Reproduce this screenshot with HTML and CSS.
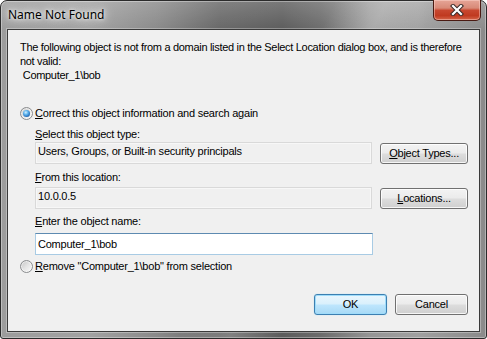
FILE: index.html
```html
<!DOCTYPE html>
<html>
<head>
<meta charset="utf-8">
<title>Name Not Found</title>
<link rel="stylesheet" href="styles.css">
</head>
<body>
<div class="window">
  <div class="titlebar">
    <span class="title">Name Not Found</span>
    <button class="close" aria-label="Close">
      <svg width="14" height="12" viewBox="0 0 14 12">
        <path d="M3 2 L11 10 M11 2 L3 10" stroke="#3a2b28" stroke-width="4.2" stroke-linecap="square" fill="none"/>
        <path d="M3 2 L11 10 M11 2 L3 10" stroke="#ffffff" stroke-width="2.2" stroke-linecap="square" fill="none"/>
      </svg>
    </button>
  </div>
  <div class="client">
    <p class="msg">The following object is not from a domain listed in the Select Location dialog box, and is therefore<br>not valid:<br>&nbsp;Computer_1\bob</p>

    <div class="option opt1">
      <span class="radio checked"></span>
      <span class="opt-label"><u>C</u>orrect this object information and search again</span>
    </div>

    <div class="group">
      <div class="label lbl1"><u>S</u>elect this object type:</div>
      <div class="row row1">
        <div class="field ro">Users, Groups, or Built-in security principals</div>
        <button class="btn side"><u>O</u>bject Types...</button>
      </div>
      <div class="label lbl2"><u>F</u>rom this location:</div>
      <div class="row row2">
        <div class="field ro">10.0.0.5</div>
        <button class="btn side"><u>L</u>ocations...</button>
      </div>
      <div class="label lbl3"><u>E</u>nter the object name:</div>
      <div class="field edit">Computer_1\bob</div>
    </div>

    <div class="option opt2">
      <span class="radio"></span>
      <span class="opt-label"><u>R</u>emove "Computer_1\bob" from selection</span>
    </div>

    <div class="footer">
      <button class="btn default">OK</button>
      <button class="btn">Cancel</button>
    </div>
  </div>
</div>
</body>
</html>
```
FILE: styles.css
```css
* { box-sizing: border-box; }
html, body { margin: 0; padding: 0; }
body {
  width: 487px;
  height: 339px;
  overflow: hidden;
  font-family: "Liberation Sans", Arial, sans-serif;
  font-size: 11px;
  letter-spacing: -0.22px;
  color: #000;
  background: #ffffff;
}

.window {
  position: relative;
  width: 487px;
  height: 339px;
  border: 1px solid #2b2b2b;
  border-radius: 7px 7px 3px 3px;
  padding: 0 6px 6px;
  display: flex;
  flex-direction: column;
  background:
    linear-gradient(115deg, rgba(255,255,255,0) 0%, rgba(255,255,255,0) 52%, rgba(255,255,255,0.18) 60%, rgba(255,255,255,0) 68%),
    linear-gradient(180deg, rgba(255,255,255,0.18) 0%, rgba(255,255,255,0) 30px),
    linear-gradient(90deg, #9c9c9c 0%, #a2a2a2 18%, #8a8a8a 32%, #676767 45%, #5c5c5c 58%, #6c6c6c 66%, #959595 76%, #a0a0a0 86%, #8a8a8a 100%);
  box-shadow: inset 0 0 0 1px rgba(255,255,255,0.35);
}

.titlebar {
  height: 28px;
  display: flex;
  align-items: center;
  padding-left: 1px;
  padding-bottom: 1px;
}
.title {
  font-family: "Noto Sans", "Open Sans", sans-serif;
  font-size: 12px;
  letter-spacing: 0;
  color: #000;
  text-shadow: 0 0 7px #ffffff, 0 0 12px rgba(255,255,255,0.9), 0 0 3px rgba(255,255,255,0.8);
}

.close {
  position: absolute;
  top: -1px;
  right: 5px;
  width: 48px;
  height: 21px;
  padding: 0;
  margin: 0;
  border: 1px solid #4a1a12;
  border-top: none;
  border-radius: 0 0 5px 5px;
  background: linear-gradient(180deg, #e6a597 0%, #d88a78 40%, #c8472f 52%, #c03a20 78%, #d5654a 100%);
  box-shadow: inset 0 0 0 1px rgba(255,220,210,0.45);
  display: flex;
  align-items: center;
  justify-content: center;
}

.client {
  flex: 1;
  background: #f0f0f0;
  border: 1px solid #3a3a3a;
  box-shadow: 0 0 0 1px rgba(255,255,255,0.3);
  padding: 10px 11px 0 12px;
  display: flex;
  flex-direction: column;
}

.msg {
  margin: 0;
  line-height: 14px;
  white-space: nowrap;
  letter-spacing: -0.31px;
}

.option {
  display: flex;
  align-items: center;
  height: 14px;
  line-height: 14px;
}
.opt1 { margin-top: 24px; }
.opt2 { margin-top: 4px; }
.opt-label { margin-left: 2px; }

.radio {
  position: relative;
  width: 13px;
  height: 13px;
  border-radius: 50%;
  border: 1px solid #8a8c8e;
  background: linear-gradient(135deg, #c4c4c4 0%, #e4e4e4 50%, #fbfbfb 100%);
  box-shadow: inset 0 0 0 1px rgba(255,255,255,0.55);
  flex: none;
}
.radio.checked::after {
  content: "";
  position: absolute;
  left: 2px;
  top: 2px;
  width: 7px;
  height: 7px;
  border-radius: 50%;
  background: radial-gradient(circle at 40% 35%, #d4f0ff 0%, #5fb4ee 35%, #1f66b3 75%, #123f78 100%);
}

.group {
  margin-left: 15px;
  display: flex;
  flex-direction: column;
}
.label { line-height: 14px; height: 14px; }
.lbl1 { margin-top: 7px; }
.lbl2 { margin-top: 6px; }
.lbl3 { margin-top: 5px; }

.row {
  display: flex;
  align-items: flex-start;
  gap: 8px;
}
.row1 { margin-top: 1px; }
.row2 { margin-top: 3px; }

.field {
  width: 338px;
  height: 22px;
  padding: 0 2px;
  white-space: nowrap;
}
.field.ro {
  border: 1px solid #d9d9d9;
  background: #f0f0f0;
  box-shadow: inset 0 0 0 1px #f7f7f7;
  line-height: 14px;
  padding-top: 1px;
}
.field.edit {
  margin-top: 5px;
  background: #ffffff;
  border: 1px solid #a8cbe4;
  border-top-color: #5d8ab1;
  line-height: 20px;
}

.btn {
  height: 21px;
  padding: 0;
  margin: 0;
  font-family: "Liberation Sans", Arial, sans-serif;
  font-size: 11px;
  letter-spacing: -0.22px;
  color: #000;
  line-height: 19px;
  border: 1px solid #707070;
  border-radius: 3px;
  background: linear-gradient(180deg, #f3f3f3 0%, #ebebeb 48%, #dddddd 52%, #cfcfcf 100%);
  box-shadow: inset 0 0 0 1px rgba(255,255,255,0.8);
  text-align: center;
}
.btn.side { width: 88px; margin-top: 1px; }

.footer {
  margin-top: 21px;
  display: flex;
  justify-content: flex-end;
  gap: 8px;
}
.footer .btn { width: 73px; }
.btn.default {
  border-color: #3c7fb1;
  background: linear-gradient(180deg, #eaf6fd 0%, #d9f0fc 48%, #bee6fd 52%, #a7d9f5 100%);
  box-shadow: inset 0 0 0 1px #9fdcfa, 0 0 1px 0 #7fd0f7;
}
```
